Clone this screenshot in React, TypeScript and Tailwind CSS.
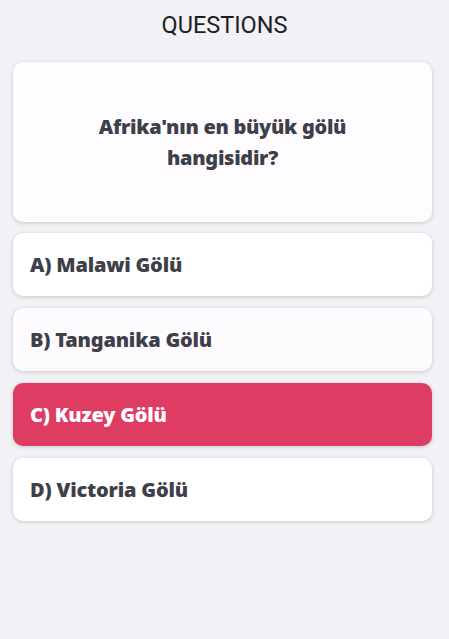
import React from 'react';

const options = [
  { label: 'A) Malawi Gölü', bg: 'bg-white', text: 'text-[#3e4049]' },
  { label: 'B) Tanganika Gölü', bg: 'bg-[#fefbfe]', text: 'text-[#3e4049]' },
  { label: 'C) Kuzey Gölü', bg: 'bg-[#de3c63]', text: 'text-white' },
  { label: 'D) Victoria Gölü', bg: 'bg-white', text: 'text-[#3e4049]' },
];

const App: React.FC = () => {
  return (
    <div className="min-h-[639px] w-full bg-[#f2f1f6]">
      {/* Header */}
      <h1 className="pt-[10px] text-center font-['Roboto',sans-serif] text-[23.5px] leading-[30px] text-[#1f1f1f]">
        QUESTIONS
      </h1>

      <div className="pl-[13px] pr-[17px]">
        {/* Question */}
        <div className="mt-[22px] flex h-[160px] items-center justify-center rounded-[10px] bg-[#fefcff] px-10 shadow-[0_1px_4px_rgba(0,0,0,0.18)]">
          <p className="text-center font-['Noto_Sans',sans-serif] text-[20px] font-black leading-[31px] tracking-[-0.3px] text-[#3e4049]">
            Afrika'nın en büyük gölü
            <br />
            hangisidir?
          </p>
        </div>

        {/* Options */}
        <div className="mt-[11px] flex flex-col gap-[12px]">
          {options.map((o) => (
            <div
              key={o.label}
              className={`flex h-[63px] items-center rounded-[10px] px-[17px] shadow-[0_1px_4px_rgba(0,0,0,0.18)] ${o.bg}`}
            >
              <span className={`font-['Noto_Sans',sans-serif] text-[20px] font-black tracking-[-0.2px] ${o.text}`}>
                {o.label}
              </span>
            </div>
          ))}
        </div>
      </div>
    </div>
  );
};

export default App;
